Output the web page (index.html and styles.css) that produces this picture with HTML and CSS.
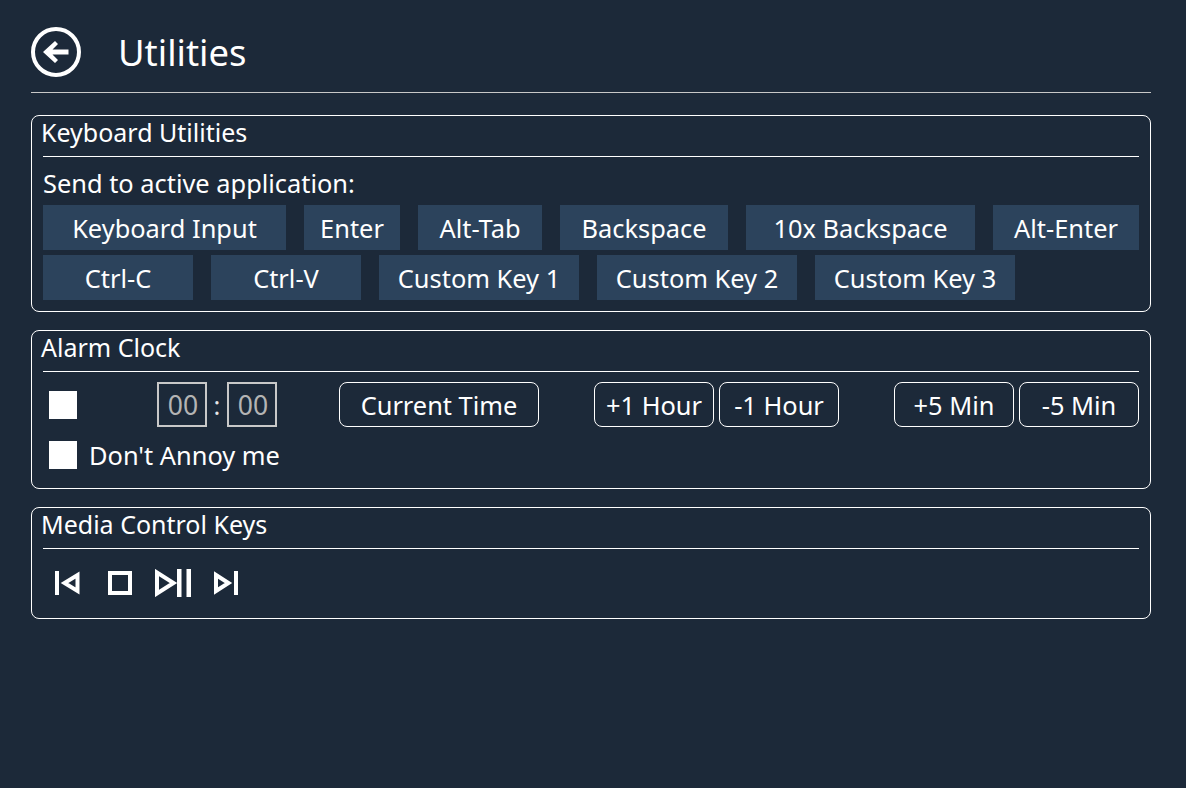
FILE: index.html
```html
<!DOCTYPE html>
<html lang="en">
<head>
  <meta charset="UTF-8" />
  <title>Utilities</title>
  <link rel="stylesheet" href="styles.css">
</head>
<body>
  <div class="page">
    <header class="header">
      <button class="back" type="button" aria-label="Back">
        <svg width="50" height="50" viewBox="0 0 50 50">
          <circle cx="25" cy="25" r="23" fill="none" stroke="#fff" stroke-width="4"/>
          <path d="M37.5 22.5H21.5L27 17L24 14L12 25L24 36L27 33L21.5 27.5H37.5Z" fill="#fff"/>
        </svg>
      </button>
      <h1>Utilities</h1>
    </header>

    <section class="panel panel-keyboard">
      <h2>Keyboard Utilities</h2>
      <div class="send-label">Send to active application:</div>
      <div class="key-row">
        <button class="key w243" type="button">Keyboard Input</button>
        <button class="key w96" type="button">Enter</button>
        <button class="key w124" type="button">Alt-Tab</button>
        <button class="key w168" type="button">Backspace</button>
        <button class="key w229" type="button">10x Backspace</button>
        <button class="key w146" type="button">Alt-Enter</button>
      </div>
      <div class="key-row">
        <button class="key w150" type="button">Ctrl-C</button>
        <button class="key w150" type="button">Ctrl-V</button>
        <button class="key w200" type="button">Custom Key 1</button>
        <button class="key w200" type="button">Custom Key 2</button>
        <button class="key w200" type="button">Custom Key 3</button>
      </div>
    </section>

    <section class="panel panel-alarm">
      <h2>Alarm Clock</h2>
      <div class="alarm-row">
        <span class="check"></span>
        <div class="time">
          <span class="time-box">00</span>
          <span class="colon">:</span>
          <span class="time-box">00</span>
        </div>
        <button class="outline w200 current" type="button">Current Time</button>
        <div class="pair pair-hour">
          <button class="outline w120" type="button">+1 Hour</button>
          <button class="outline w120" type="button">-1 Hour</button>
        </div>
        <div class="pair pair-min">
          <button class="outline w120" type="button">+5 Min</button>
          <button class="outline w120" type="button">-5 Min</button>
        </div>
      </div>
      <label class="annoy"><span class="check"></span>Don't Annoy me</label>
    </section>

    <section class="panel panel-media">
      <h2>Media Control Keys</h2>
      <div class="media-row">
        <svg class="prev" width="25" height="24" viewBox="0 0 25 24" fill="none">
          <rect x="0" y="0" width="4" height="24" fill="#fff"/>
          <path d="M22.5 4V20L9.5 12Z" stroke="#fff" stroke-width="4"/>
        </svg>
        <svg class="stop" width="24" height="24" viewBox="0 0 24 24" fill="none">
          <rect x="2" y="2" width="20" height="20" stroke="#fff" stroke-width="4"/>
        </svg>
        <svg class="play" width="37" height="28" viewBox="0 0 37 28" fill="none">
          <path d="M2 3.5V24.5L18.5 14Z" stroke="#fff" stroke-width="4"/>
          <rect x="22" y="0" width="4.5" height="28" fill="#fff"/>
          <rect x="31.5" y="0" width="4.5" height="28" fill="#fff"/>
        </svg>
        <svg class="next" width="24" height="24" viewBox="0 0 24 24" fill="none">
          <path d="M2 4V20L14.5 12Z" stroke="#fff" stroke-width="4"/>
          <rect x="20" y="0" width="4" height="24" fill="#fff"/>
        </svg>
      </div>
    </section>
  </div>
</body>
</html>
```

FILE: styles.css
```css
* {
  box-sizing: border-box;
}
body {
  margin: 0;
  background-color: #1c2939;
  color: white;
  font-family: "Noto Sans", sans-serif;
  font-size: 25.4px;
}
.page {
  width: 1120px;
  margin-left: 31px;
  padding-top: 27px;
}
button {
  font-family: inherit;
  font-size: 25.4px;
  color: white;
  padding: 0;
}
.header {
  display: flex;
  align-items: center;
  height: 66px;
  padding-bottom: 16px;
  border-bottom: 1px solid #c8c8c8;
}
.back {
  width: 50px;
  height: 50px;
  background: none;
  border: none;
  margin-right: 37px;
}
h1 {
  margin: 0;
  font-size: 36.4px;
  font-weight: normal;
}
.panel {
  border: 1px solid white;
  border-radius: 8px;
  padding: 0 11px;
  margin-top: 22px;
}
.panel + .panel {
  margin-top: 18px;
}
h2 {
  margin: 0;
  height: 41px;
  line-height: 32px;
  font-size: 25px;
  font-weight: normal;
  border-bottom: 1px solid white;
  text-indent: -2px;
}
.panel-keyboard {
  height: 197px;
}
.panel-alarm {
  height: 159px;
}
.panel-media {
  height: 112px;
}
.send-label {
  height: 48px;
  line-height: 53px;
}
.key-row {
  display: flex;
  gap: 18px;
  margin-bottom: 5px;
}
.key {
  height: 45px;
  background-color: #2c435c;
  border: none;
}
.outline {
  height: 45px;
  background: none;
  border: 1px solid white;
  border-radius: 8px;
}
.w96 { width: 96px; }
.w120 { width: 120px; }
.w124 { width: 124px; }
.w146 { width: 146px; }
.w150 { width: 150px; }
.w168 { width: 168px; }
.w200 { width: 200px; }
.w229 { width: 229px; }
.w243 { width: 243px; }
.alarm-row {
  display: flex;
  align-items: center;
  margin-top: 10px;
}
.check {
  display: block;
  width: 28px;
  height: 28px;
  background-color: white;
  flex: none;
}
.alarm-row > .check {
  margin-left: 6px;
}
.time {
  display: flex;
  align-items: center;
  margin-left: 80px;
}
.time-box {
  width: 50px;
  height: 45px;
  line-height: 43px;
  text-align: center;
  border: 2px solid #c8c8c8;
  color: #b4b4b4;
  font-size: 26.5px;
  padding-left: 2px;
}
.colon {
  width: 20px;
  text-align: center;
  color: #e6e6e6;
}
.current {
  margin-left: 62px;
}
.pair {
  display: flex;
  gap: 5px;
}
.pair-hour {
  margin-left: 55px;
}
.pair-min {
  margin-left: 55px;
}
.annoy {
  display: flex;
  align-items: center;
  gap: 12px;
  margin: 14px 0 0 6px;
  height: 28px;
  line-height: 28px;
}
.media-row {
  display: flex;
  align-items: center;
  height: 28px;
  margin-top: 20px;
  padding-left: 12px;
}
.stop {
  margin-left: 28px;
}
.play {
  margin-left: 23px;
}
.next {
  margin-left: 22px;
}
```
